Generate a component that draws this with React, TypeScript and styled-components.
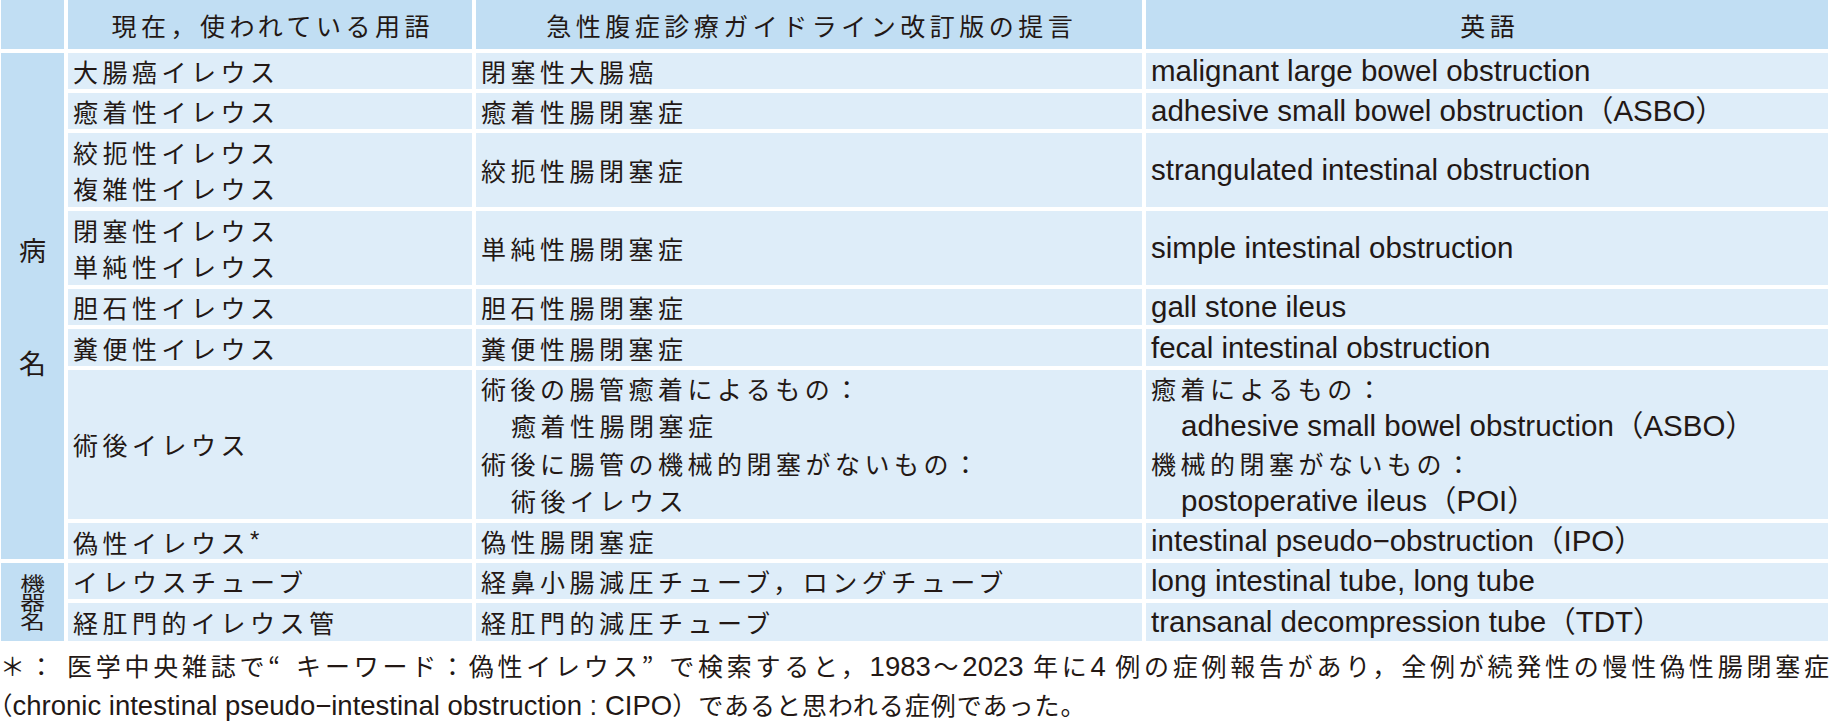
import React from 'react';
import styled, { createGlobalStyle } from 'styled-components';

const GlobalStyle = createGlobalStyle`
  html, body { margin: 0; padding: 0; background: #ffffff; overflow: hidden; }
  body {
    font-family: "Noto Sans CJK JP", sans-serif;
    color: #231815;
  }
`;

const HEAD = '#c1def3';
const BODY = '#deedf9';

const Page = styled.div`
  width: 1830px;
  height: 724px;
  overflow: hidden;
  background: #ffffff;
`;

const Table = styled.div`
  display: grid;
  width: 1827px;
  margin-left: 1px;
  grid-template-columns: 63px 404px 666px 1fr;
  grid-template-rows: 49px 36px 36px 74px 74px 36px 37px 149px 36px 36px 38px;
  column-gap: 4px;
  row-gap: 4px;
`;

const Cell = styled.div<{ $head?: boolean; $center?: boolean; $lh?: number }>`
  background: ${(p) => (p.$head ? HEAD : BODY)};
  display: flex;
  flex-direction: column;
  justify-content: center;
  align-items: ${(p) => (p.$center ? 'center' : 'flex-start')};
  padding: 0 4px 0 5px;
  line-height: ${(p) => p.$lh ?? 36}px;
  white-space: nowrap;
  overflow: hidden;
`;

const GroupCell = styled.div<{ $span: number }>`
  grid-column: 1;
  grid-row: span ${(p) => p.$span};
  background: ${HEAD};
  display: flex;
  flex-direction: column;
  align-items: center;
  justify-content: center;
`;

const BigLabel = styled.div`
  display: flex;
  flex-direction: column;
  align-items: center;
  gap: 86px;
  font-size: 27px;
  line-height: 27px;
`;

const FlatLabel = styled.div`
  writing-mode: vertical-rl;
  font-size: 19px;
  line-height: 1;
  letter-spacing: 0;
  transform: scaleX(1.3);
`;

const Jp = styled.div<{ $indent?: boolean }>`
  font-family: "Noto Sans CJK JP", sans-serif;
  font-size: 25px;
  letter-spacing: 4.5px;
  padding-left: ${(p) => (p.$indent ? '30px' : '0')};
`;

const En = styled.div<{ $indent?: boolean }>`
  font-family: "Liberation Sans", "Noto Sans CJK JP", sans-serif;
  font-size: 29.5px;
  letter-spacing: 0;
  padding-left: ${(p) => (p.$indent ? '30px' : '0')};
`;

const HeadText = styled.div`
  font-family: "Noto Sans CJK JP", sans-serif;
  font-size: 25px;
  letter-spacing: 4.5px;
  padding-left: 4.5px;
`;

const Star = styled.span`
  font-family: "Liberation Sans", sans-serif;
  font-size: 24px;
  letter-spacing: 0;
  vertical-align: 5px;
`;

const Notes = styled.div`
  margin-top: 3px;
  font-family: "Noto Sans CJK JP", sans-serif;
  font-size: 25px;
`;

const NoteLine = styled.div<{ $justify?: boolean; $h: number }>`
  height: ${(p) => p.$h}px;
  line-height: ${(p) => p.$h}px;
  white-space: nowrap;
  letter-spacing: 1px;
  text-align: ${(p) => (p.$justify ? 'justify' : 'left')};
  text-align-last: ${(p) => (p.$justify ? 'justify' : 'left')};
`;

const Latin = styled.span`
  font-family: "Liberation Sans", sans-serif;
  font-size: 27.5px;
  letter-spacing: 0;
`;

const Quote = styled.span<{ $open?: boolean }>`
  display: inline-block;
  width: 25px;
  letter-spacing: 0;
  text-align: ${(p) => (p.$open ? 'right' : 'left')};
`;

const HalfParen = styled.span`
  font-feature-settings: "halt" 1;
  letter-spacing: 0;
`;

type Line = { t: React.ReactNode; en?: boolean; indent?: boolean };
type Row = { a: Line[]; b: Line[]; c: Line[]; lh?: number };

const jp = (t: React.ReactNode, indent = false): Line => ({ t, indent });
const en = (t: string, indent = false): Line => ({ t, en: true, indent });

const disease: Row[] = [
  { a: [jp('大腸癌イレウス')], b: [jp('閉塞性大腸癌')], c: [en('malignant large bowel obstruction')] },
  { a: [jp('癒着性イレウス')], b: [jp('癒着性腸閉塞症')], c: [en('adhesive small bowel obstruction（ASBO）')] },
  { a: [jp('絞扼性イレウス'), jp('複雑性イレウス')], b: [jp('絞扼性腸閉塞症')], c: [en('strangulated intestinal obstruction')] },
  { a: [jp('閉塞性イレウス'), jp('単純性イレウス')], b: [jp('単純性腸閉塞症')], c: [en('simple intestinal obstruction')] },
  { a: [jp('胆石性イレウス')], b: [jp('胆石性腸閉塞症')], c: [en('gall stone ileus')] },
  { a: [jp('糞便性イレウス')], b: [jp('糞便性腸閉塞症')], c: [en('fecal intestinal obstruction')] },
  {
    lh: 37.5,
    a: [jp('術後イレウス')],
    b: [
      jp('術後の腸管癒着によるもの：'),
      jp('癒着性腸閉塞症', true),
      jp('術後に腸管の機械的閉塞がないもの：'),
      jp('術後イレウス', true),
    ],
    c: [
      jp('癒着によるもの：'),
      en('adhesive small bowel obstruction（ASBO）', true),
      jp('機械的閉塞がないもの：'),
      en('postoperative ileus（POI）', true),
    ],
  },
  {
    a: [jp(<>偽性イレウス<Star>*</Star></>)],
    b: [jp('偽性腸閉塞症')],
    c: [en('intestinal pseudo−obstruction（IPO）')],
  },
];

const devices: Row[] = [
  { a: [jp('イレウスチューブ')], b: [jp('経鼻小腸減圧チューブ，ロングチューブ')], c: [en('long intestinal tube, long tube')] },
  { a: [jp('経肛門的イレウス管')], b: [jp('経肛門的減圧チューブ')], c: [en('transanal decompression tube（TDT）')] },
];

const renderLines = (lines: Line[]) =>
  lines.map((l, i) =>
    l.en ? (
      <En key={i} $indent={l.indent}>{l.t}</En>
    ) : (
      <Jp key={i} $indent={l.indent}>{l.t}</Jp>
    )
  );

const renderRow = (r: Row, key: string) => (
  <React.Fragment key={key}>
    <Cell $lh={r.lh}>{renderLines(r.a)}</Cell>
    <Cell $lh={r.lh}>{renderLines(r.b)}</Cell>
    <Cell $lh={r.lh}>{renderLines(r.c)}</Cell>
  </React.Fragment>
);

export default function App() {
  return (
    <Page>
      <GlobalStyle />
      <Table>
        <Cell $head $center />
        <Cell $head $center>
          <HeadText>現在，使われている用語</HeadText>
        </Cell>
        <Cell $head $center>
          <HeadText>急性腹症診療ガイドライン改訂版の提言</HeadText>
        </Cell>
        <Cell $head $center>
          <HeadText>英語</HeadText>
        </Cell>

        <GroupCell $span={disease.length}>
          <BigLabel>
            <span>病</span>
            <span>名</span>
          </BigLabel>
        </GroupCell>
        {disease.map((r, i) => renderRow(r, `d${i}`))}

        <GroupCell $span={devices.length}>
          <FlatLabel>機器名</FlatLabel>
        </GroupCell>
        {devices.map((r, i) => renderRow(r, `v${i}`))}
      </Table>

      <Notes>
        <NoteLine $justify $h={42}>
          ＊： 医学中央雑誌で<Quote $open>“</Quote>キーワード：偽性イレウス<Quote>”</Quote>で検索すると，<Latin>1983</Latin>〜<Latin>2023</Latin> 年に<Latin>4</Latin> 例の症例報告があり，全例が続発性の慢性偽性腸閉塞症
        </NoteLine>
        <NoteLine $h={37}>
          <HalfParen>（</HalfParen>
          <Latin>chronic intestinal pseudo−intestinal obstruction : CIPO</Latin>）であると思われる症例であった。
        </NoteLine>
      </Notes>
    </Page>
  );
}
